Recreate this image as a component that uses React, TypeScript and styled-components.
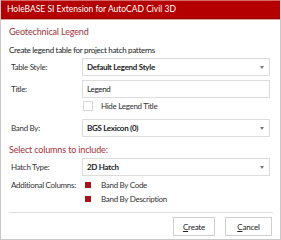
import styled, { createGlobalStyle } from "styled-components";

const GlobalStyle = createGlobalStyle`
  html, body {
    margin: 0;
    padding: 0;
    background: #ffffff;
  }
  body {
    font-family: Lato, "Open Sans", sans-serif;
  }
`;

const Window = styled.div`
  width: 281px;
  height: 240px;
  box-sizing: border-box;
  border: 1px solid #c9c9c9;
  border-top: none;
  display: flex;
  flex-direction: column;
  background: #fff;
`;

const TitleBar = styled.div`
  height: 19px;
  box-sizing: border-box;
  background: #b40000;
  border-top: 1px solid #d66a6a;
  border-bottom: 1px solid #8e0000;
  color: #fff;
  font-size: 8.5px;
  line-height: 17px;
  padding-left: 6px;
  box-shadow: 0 1px 0 #e8a0a0;
`;

const Body = styled.div`
  flex: 1;
  padding: 6px 7px 0 7px;
  display: flex;
  flex-direction: column;
  font-size: 8px;
  letter-spacing: -0.3px;
`;

const Heading = styled.div<{ $top?: number }>`
  color: #a3323a;
  font-size: 9px;
  letter-spacing: -0.15px;
  line-height: 14px;
  margin-top: ${(p) => p.$top ?? 0}px;
  padding-left: 1px;
`;

const Note = styled.div`
  color: #222;
  line-height: 12px;
  margin-top: 5px;
  padding-left: 1px;
`;

const Row = styled.div<{ $gap?: number }>`
  display: grid;
  grid-template-columns: 74px 1fr;
  align-items: center;
  margin-top: ${(p) => p.$gap ?? 4}px;
`;

const Label = styled.div<{ $top?: boolean }>`
  color: #333;
  padding-left: 3px;
  align-self: ${(p) => (p.$top ? "start" : "center")};
  line-height: 14px;
  white-space: nowrap;
`;

const Field = styled.div<{ $bold?: boolean }>`
  height: 18px;
  box-sizing: border-box;
  border: 1px solid #dcdcdc;
  display: flex;
  align-items: center;
  justify-content: space-between;
  padding: 0 5px 0 4px;
  font-weight: ${(p) => (p.$bold ? 700 : 400)};
  color: #222;
  margin-right: 3px;
`;

const Caret = styled.span`
  width: 0;
  height: 0;
  border-left: 2.5px solid transparent;
  border-right: 2.5px solid transparent;
  border-top: 3px solid #777;
`;

const CheckLine = styled.div`
  display: flex;
  align-items: center;
  gap: 8px;
  color: #333;
  height: 14px;
  padding-left: 1px;
`;

const Box = styled.span<{ $checked?: boolean }>`
  width: 10px;
  height: 10px;
  box-sizing: border-box;
  border: 1px solid ${(p) => (p.$checked ? "#fff" : "#d6d6d6")};
  display: flex;
  align-items: center;
  justify-content: center;
  &::after {
    content: "";
    display: ${(p) => (p.$checked ? "block" : "none")};
    width: 6px;
    height: 6px;
    background: #a8121a;
  }
`;

const Checks = styled.div`
  display: flex;
  flex-direction: column;
`;

const Separator = styled.div`
  height: 1px;
  background: #dedede;
  margin: 6px 0 0 1px;
`;

const Buttons = styled.div`
  display: flex;
  justify-content: flex-end;
  gap: 10px;
  margin-top: 4px;
  padding-right: 1px;
`;

const Button = styled.button<{ $w: number }>`
  width: ${(p) => p.$w}px;
  height: 19px;
  background: #fff;
  border: 1px solid #cfcfcf;
  font-family: inherit;
  font-size: 8px;
  letter-spacing: -0.2px;
  color: #222;
  padding: 0;
  u {
    text-decoration: underline;
  }
`;

export default function App() {
  return (
    <>
      <GlobalStyle />
      <Window>
        <TitleBar>HoleBASE SI Extension for AutoCAD Civil 3D</TitleBar>
        <Body>
          <Heading>Geotechnical Legend</Heading>
          <Note>Create legend table for project hatch patterns</Note>
          <Row $gap={2}>
            <Label>Table Style:</Label>
            <Field $bold>
              Default Legend Style
              <Caret />
            </Field>
          </Row>
          <Row>
            <Label>Title:</Label>
            <Field>Legend</Field>
          </Row>
          <Row $gap={1}>
            <span />
            <CheckLine>
              <Box />
              Hide Legend Title
            </CheckLine>
          </Row>
          <Row $gap={6}>
            <Label>Band By:</Label>
            <Field $bold>
              BGS Lexicon (0)
              <Caret />
            </Field>
          </Row>
          <Heading $top={6}>Select columns to include:</Heading>
          <Row $gap={1}>
            <Label>Hatch Type:</Label>
            <Field $bold>
              2D Hatch
              <Caret />
            </Field>
          </Row>
          <Row $gap={2}>
            <Label $top>Additional Columns:</Label>
            <Checks>
              <CheckLine>
                <Box $checked />
                Band By Code
              </CheckLine>
              <CheckLine>
                <Box $checked />
                Band By Description
              </CheckLine>
            </Checks>
          </Row>
          <Separator />
          <Buttons>
            <Button $w={42}>
              <u>C</u>reate
            </Button>
            <Button $w={47}>
              <u>C</u>ancel
            </Button>
          </Buttons>
        </Body>
      </Window>
    </>
  );
}
